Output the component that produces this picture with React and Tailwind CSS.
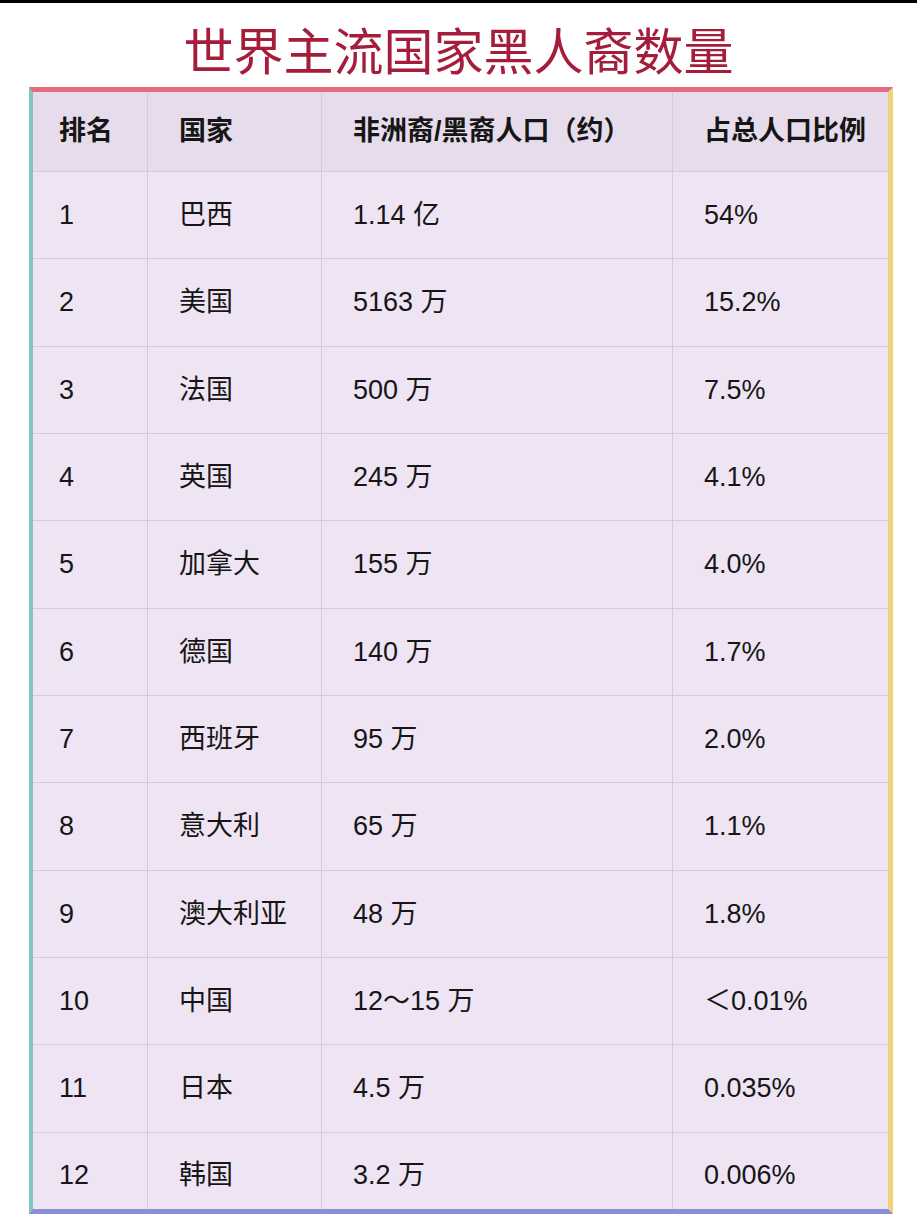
import React from "react";

const rows = [
  ["1", "巴西", "1.14 亿", "54%"],
  ["2", "美国", "5163 万", "15.2%"],
  ["3", "法国", "500 万", "7.5%"],
  ["4", "英国", "245 万", "4.1%"],
  ["5", "加拿大", "155 万", "4.0%"],
  ["6", "德国", "140 万", "1.7%"],
  ["7", "西班牙", "95 万", "2.0%"],
  ["8", "意大利", "65 万", "1.1%"],
  ["9", "澳大利亚", "48 万", "1.8%"],
  ["10", "中国", "12～15 万", "＜0.01%"],
  ["11", "日本", "4.5 万", "0.035%"],
  ["12", "韩国", "3.2 万", "0.006%"],
];

const font = { fontFamily: '"Liberation Sans", "Noto Sans CJK SC", sans-serif' };

export default function App() {
  return (
    <div className="w-[917px] h-[1224px] bg-white" style={font}>
      <div className="h-[3px] bg-black" />
      <div className="h-[84px] flex justify-center pt-[15px]">
        <h1 className="text-[50px] leading-[60px] font-normal text-[#a51d3b]" style={{ fontFamily: '"Noto Sans CJK SC", sans-serif' }}>
          世界主流国家黑人裔数量
        </h1>
      </div>
      <div className="ml-[29px] w-[864px] border-l-[4px] border-t-[5px] border-r-[5px] border-b-[5px] border-l-[#80c6be] border-t-[#e66a80] border-r-[#f0d27c] border-b-[#8890d6]">
        <div className="grid grid-cols-[114px_173px_350px_215px] gap-px bg-[#d6c9de] text-[27px] text-[#161616]">
          {["排名", "国家", "非洲裔/黑裔人口（约）", "占总人口比例"].map((h, i) => (
            <div
              key={h}
              className={`h-[79px] bg-[#e6dcec] flex items-center font-bold ${i === 0 ? "pl-[26px]" : "pl-[31px]"}`}
            >
              {h}
            </div>
          ))}
          {rows.map((r, ri) =>
            r.map((c, ci) => (
              <div
                key={ri + "-" + ci}
                className={`${ri === rows.length - 1 ? "h-[76px] pt-[10px]" : "h-[86.33px]"} bg-[#eee4f3] flex items-center ${ci === 0 ? "pl-[26px]" : "pl-[31px]"}`}
              >
                {c}
              </div>
            ))
          )}
        </div>
      </div>
    </div>
  );
}
